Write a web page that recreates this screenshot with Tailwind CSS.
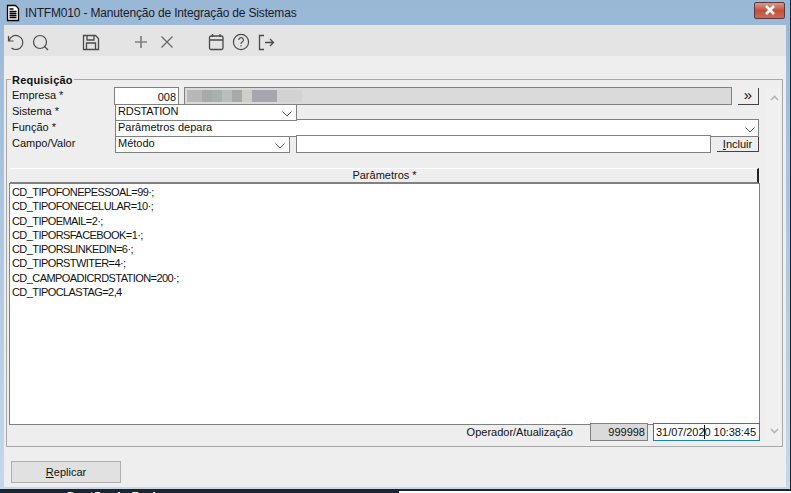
<!DOCTYPE html>
<html lang="pt-BR">
<head>
  <meta charset="UTF-8" />
  <title>INTFM010</title>
  <script src="https://cdn.jsdelivr.net/npm/@tailwindcss/browser@4"></script>
</head>
<body class="w-[791px] h-[493px] overflow-hidden bg-[#1b2530] font-['Liberation_Sans',sans-serif] text-[11px] leading-[14px] text-[#111]">

  <!-- Window -->
  <div class="w-[790px] h-[489px] flex flex-col bg-gradient-to-b from-[#99b8d6] to-[#c3d8ec] pl-[4px] pr-[4px] pb-[2px]">

    <!-- Title bar -->
    <div class="h-[25px] -ml-[4px] -mr-[4px] flex items-center pl-[5px] pr-[5px] shrink-0">
      <svg width="16" height="18" viewBox="0 0 16 18" class="mr-[4px]" fill="none" stroke="#000" stroke-width="1">
        <path d="M2.5 1.5h8l3 3v12h-11z" fill="#fff" stroke-width="1.3" />
        <path d="M4.5 5h4M4.5 7.5h7M4.5 9.5h7M4.5 11.5h7M4.5 13.5h7" stroke-width="1.5" />
      </svg>
      <span class="text-[12px] tracking-[-0.17px] text-[#1a1a2a]">INTFM010 - Manutenção de Integração de Sistemas</span>
      <div class="ml-auto w-[31px] h-[17px] -mt-[5px] rounded-[2px] border border-[#5a3a3a] bg-gradient-to-b from-[#d89a8c] via-[#c0503c] to-[#c96a58] flex items-center justify-center">
        <svg width="12" height="10" viewBox="0 0 12 10"><path d="M2 1l8 8M10 1l-8 8" stroke="#fff" stroke-width="2.6" /></svg>
      </div>
    </div>

    <!-- Toolbar -->
    <div class="h-[31px] pt-[2px] bg-[#e4e4e4] flex items-center shrink-0">
      <svg class="ml-[3px]" width="18" height="18" viewBox="0 0 18 18" fill="none" stroke="#4a4a4a" stroke-width="1.2">
        <path d="M1.5 3v5h5" /><path d="M2 8A7 7 0 1 1 4.5 15" />
      </svg>
      <svg class="ml-[6px]" width="18" height="18" viewBox="0 0 18 18" fill="none" stroke="#4a4a4a" stroke-width="1.2">
        <circle cx="9" cy="9" r="6.5" /><path d="M13.5 13.5l3.5 3.5" />
      </svg>
      <svg class="ml-[33px]" width="18" height="18" viewBox="0 0 18 18" fill="none" stroke="#4a4a4a" stroke-width="1.3">
        <path d="M1.5 2.5h12l3 3v11h-15z" /><path d="M5 2.5v4.5h7V2.5M4.5 16.5v-6.5h9v6.5" />
      </svg>
      <svg class="ml-[33px]" width="16" height="18" viewBox="0 0 16 18" fill="none" stroke="#808080" stroke-width="1.7">
        <path d="M8 3v12M2 9h12" />
      </svg>
      <svg class="ml-[10px]" width="16" height="18" viewBox="0 0 16 18" fill="none" stroke="#666" stroke-width="1.2">
        <path d="M2.5 3.5l11 11M13.5 3.5l-11 11" />
      </svg>
      <svg class="ml-[32px]" width="18" height="18" viewBox="0 0 18 18" fill="none" stroke="#4a4a4a" stroke-width="1.3">
        <rect x="2.5" y="3" width="13.5" height="13.5" rx="1.5" /><path d="M2.5 7h13.5M5.5 1v3M13 1v3" />
      </svg>
      <svg class="ml-[7px]" width="18" height="18" viewBox="0 0 18 18" fill="none" stroke="#4a4a4a" stroke-width="1.2">
        <circle cx="9" cy="9" r="7.6" /><path d="M6.8 7a2.3 2.3 0 1 1 3.4 2c-.9.5-1.2 1-1.2 2" /><path d="M9 12.2v1.4" />
      </svg>
      <svg class="ml-[7px]" width="18" height="18" viewBox="0 0 18 18" fill="none" stroke="#4a4a4a" stroke-width="1.3">
        <path d="M7 2.5H2.5v14H7M8 9.5h8.5M13 6l3.5 3.5L13 13" />
      </svg>
    </div>

    <!-- Content -->
    <div class="flex-1 bg-[#eeeeee] flex flex-col pt-[23px] pl-[2px] pr-[3px]">

      <!-- Group box -->
      <fieldset class="relative h-[368px] border border-[#a8a8a8] pl-[2px]">
        <span class="absolute -top-[7px] left-[4px] bg-[#eeeeee] px-[1px] font-bold tracking-[0.2px]">Requisição</span>

        <div class="flex">
          <div class="w-[751px] pt-[7px]">

            <!-- Empresa -->
            <div class="flex h-[18px]">
              <label class="w-[105px] pl-[3px] pt-[1px]">Empresa *</label>
              <div class="w-[65px] h-[18px] bg-white border border-[#808080] text-right pr-[2px] pt-[2px]">008</div>
              <div class="ml-[5px] w-[548px] h-[18px] bg-[#dadada] border border-[#808080] flex items-center pl-[2px]">
                <div class="w-[115px] h-[12px] flex">
                  <span class="w-[15px] bg-[#b8b8b8]"></span><span class="w-[10px] bg-[#a6aaaa]"></span><span class="w-[10px] bg-[#a8b0b0]"></span><span class="w-[10px] bg-[#bcbebe]"></span><span class="w-[10px] bg-[#a8aaaa]"></span><span class="w-[10px] bg-[#cfcfc8]"></span><span class="w-[25px] bg-[#a6a6ac]"></span><span class="w-[25px] bg-[#d2d2d2]"></span>
                </div>
              </div>
              <button class="ml-[6px] w-[21px] h-[17px] mt-[1px] bg-[#eeeeee] border-r border-b border-r-[#444] border-b-[#444] flex items-center justify-center text-[15px] leading-none pb-[3px]">»</button>
            </div>

            <!-- Sistema -->
            <div class="flex h-[14px]">
              <label class="w-[106px] pl-[3px] -mt-[1px]">Sistema *</label>
              <div class="relative z-10 -mt-[1px] w-[182px] h-[17px] bg-white border border-[#808080] pl-[2px] leading-[12px] tracking-[-0.2px]">RDSTATION
                <svg class="absolute right-[3px] top-[5px]" width="12" height="8" viewBox="0 0 12 8" fill="none" stroke="#555"><path d="M1.5 1.5l4.5 4.5 4.5-4.5" /></svg>
              </div>
            </div>

            <!-- Funcao -->
            <div class="flex h-[17px]">
              <label class="w-[106px] pl-[3px] pt-[1px]">Função *</label>
              <div class="relative w-[644px] h-[18px] bg-white border border-[#808080] pl-[2px]">Parâmetros depara
                <svg class="absolute right-[2px] top-[6px]" width="12" height="8" viewBox="0 0 12 8" fill="none" stroke="#555"><path d="M1.5 1.5l4.5 4.5 4.5-4.5" /></svg>
              </div>
            </div>

            <!-- Campo/Valor -->
            <div class="relative z-10 flex h-[17px]">
              <label class="w-[106px] pl-[3px]">Campo/Valor</label>
              <div class="relative w-[175px] h-[17px] bg-white border border-[#808080] pl-[2px] leading-[12px]">Método
                <svg class="absolute right-[3px] top-[5px]" width="12" height="8" viewBox="0 0 12 8" fill="none" stroke="#555"><path d="M1.5 1.5l4.5 4.5 4.5-4.5" /></svg>
              </div>
              <div class="ml-[6px] w-[415px] h-[18px] -mt-[1px] bg-white border border-[#808080]"></div>
              <button class="ml-[6px] mt-[1px] w-[42px] h-[15px] bg-[#eeeeee] border-r border-b border-r-[#444] border-b-[#444] text-center leading-[13px]"><span class="underline">I</span>ncluir</button>
            </div>

            <!-- Parametros -->
            <div class="ml-[1px] mt-[15px] w-[749px] h-[15px] pl-[2px] bg-[#eeeeee] border-t border-t-white border-r-2 border-b border-r-[#222] border-b-[#808080] text-center leading-[13px]">Parâmetros *</div>
            <div class="w-[751px] h-[242px] bg-white border border-[#808080] pl-[2px] pt-[1px] leading-[14.3px] tracking-[-0.57px]">
              <div>CD_TIPOFONEPESSOAL=99·;</div>
              <div>CD_TIPOFONECELULAR=10·;</div>
              <div>CD_TIPOEMAIL=2·;</div>
              <div>CD_TIPORSFACEBOOK=1·;</div>
              <div>CD_TIPORSLINKEDIN=6·;</div>
              <div>CD_TIPORSTWITER=4·;</div>
              <div>CD_CAMPOADICRDSTATION=200·;</div>
              <div>CD_TIPOCLASTAG=2,4</div>
            </div>

            <!-- Operador -->
            <div class="flex justify-end -mt-[2px]">
              <span class="mt-[2px] mr-[17px] whitespace-nowrap">Operador/Atualização</span>
              <div class="w-[58px] h-[18px] bg-[#dadada] border border-[#808080] text-right pr-[2px] pt-[1px]">999998</div>
              <div class="relative ml-[5px] w-[107px] h-[18px] bg-white border border-[#1a7fc4] pl-[2px] pt-[1px] whitespace-nowrap tracking-[-0.05px]">31/07/2020 10:38:45
                <span class="absolute left-[50px] top-[1px] w-px h-[14px] bg-[#111]"></span>
              </div>
            </div>
          </div>

          <!-- Scrollbar -->
          <div class="ml-[6px] mt-[8px] w-[16px] h-[352px] bg-[#f0f0f0] flex flex-col items-center justify-between pt-[7px] pb-[6px]">
            <svg width="9" height="6" viewBox="0 0 9 6" fill="none" stroke="#b4b4b4" stroke-width="1.6"><path d="M1 5l3.5-3.5L8 5" /></svg>
            <svg width="9" height="6" viewBox="0 0 9 6" fill="none" stroke="#b4b4b4" stroke-width="1.6"><path d="M1 1l3.5 3.5L8 1" /></svg>
          </div>
        </div>
      </fieldset>

      <!-- Footer button -->
      <div class="mt-[14px] ml-[5px]">
        <button class="w-[110px] h-[22px] bg-[#e1e1e1] border border-[#adadad] text-center"><span class="underline">R</span>eplicar</button>
      </div>
    </div>
  </div>

  <!-- Window behind -->
  <div class="flex h-[4px] overflow-hidden">
    <div class="pl-[65px] w-[399px] pt-[1px] text-white font-bold text-[13px] leading-[14px] whitespace-nowrap">Gestão de Dados</div>
    <div class="flex-1 mt-[2px] bg-white"></div>
  </div>
</body>
</html>
